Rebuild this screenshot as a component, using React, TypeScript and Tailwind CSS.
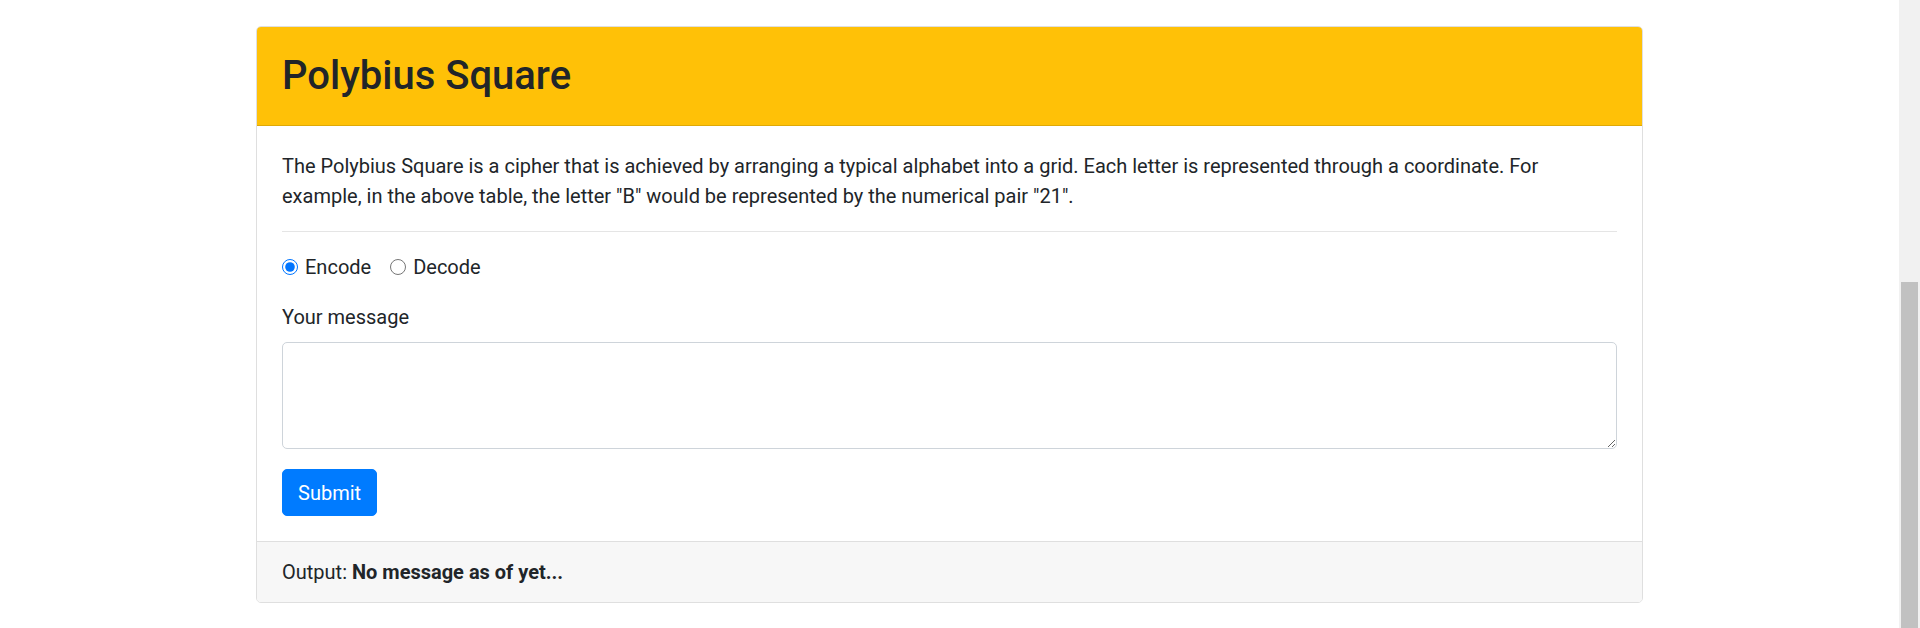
export default function App() {
  return (
    <div className="flex h-[628px] overflow-hidden bg-white font-[Roboto,sans-serif] text-[#212529]">
      <div className="flex-1 pt-[26px]">
        <div className="mx-auto w-[1387px] overflow-hidden rounded-[5px] border border-[#dfdfdf]">
          <div className="border-b border-[#dfa906] bg-[#ffc107] px-[25px] py-[25px]">
            <h2 className="text-[40px] font-medium leading-[48px] text-[#212529]">Polybius Square</h2>
          </div>
          <div className="p-[25px]">
            <p className="mb-[20px] text-[20px] leading-[30px]">
              The Polybius Square is a cipher that is achieved by arranging a typical alphabet into a grid. Each letter is represented through a coordinate. For example, in the above table, the letter "B" would be represented by the numerical pair "21".
            </p>
            <div className="mb-[20px] h-px bg-[#e5e5e5]" />
            <div className="mb-[20px] flex h-[30px] items-center text-[20px] leading-[30px]">
              <label className="mr-[19px] flex items-center">
                <input type="radio" name="mode" defaultChecked className="mr-[7px] h-[16px] w-[16px] accent-[#0075ff]" />
                <span>Encode</span>
              </label>
              <label className="flex items-center">
                <input type="radio" name="mode" className="mr-[7px] h-[16px] w-[16px] accent-[#0075ff]" />
                <span>Decode</span>
              </label>
            </div>
            <div className="mb-[10px] text-[20px] leading-[30px]">Your message</div>
            <textarea className="mb-[20px] block h-[107px] w-full rounded-[5px] border border-[#ced4da] bg-white px-[15px] py-[7px] text-[20px] leading-[30px] outline-none" />
            <button className="h-[47px] rounded-[5px] border border-[#007bff] bg-[#007bff] px-[15px] text-[20px] leading-[30px] text-white">
              Submit
            </button>
          </div>
          <div className="border-t border-[#dfdfdf] bg-[#f7f7f7] px-[25px] py-[15px] text-[20px] leading-[30px]">
            Output: <b className="font-bold">No message as of yet...</b>
          </div>
        </div>
      </div>
      <div className="flex w-[21px] flex-col bg-[#f1f1f1]">
        <div className="h-[282px]" />
        <div className="mx-[2px] flex-1 bg-[#c1c1c1]" />
      </div>
    </div>
  );
}
